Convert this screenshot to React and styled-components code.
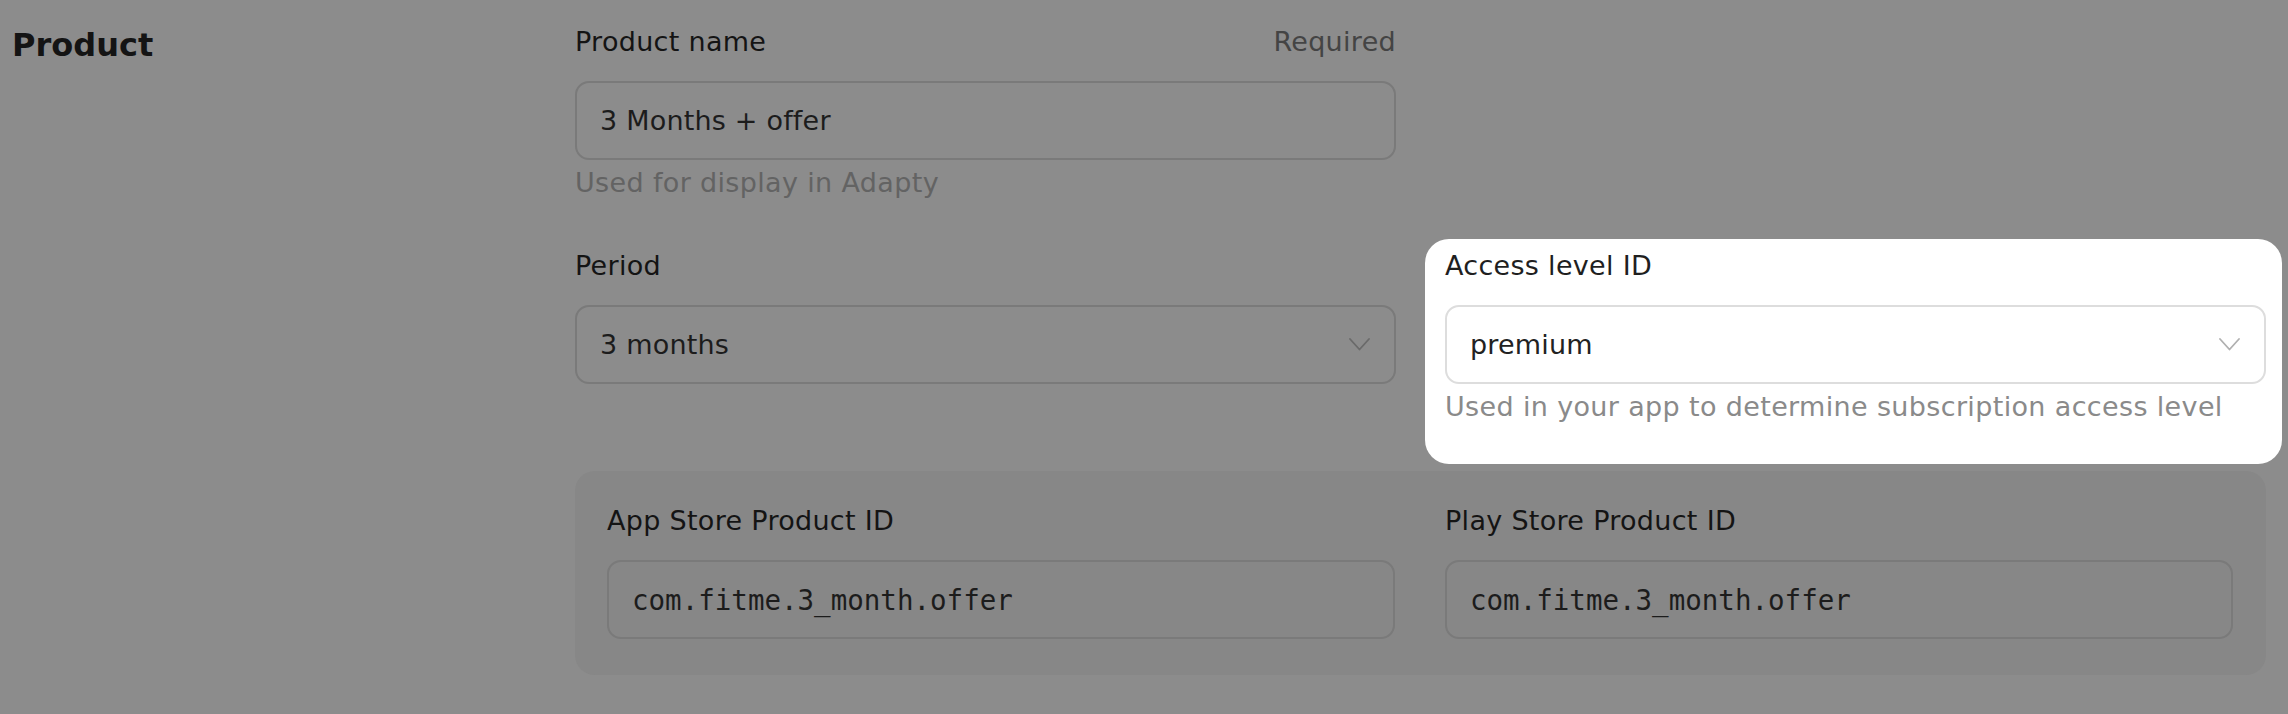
import React from "react";
import styled, { createGlobalStyle } from "styled-components";

const GlobalStyle = createGlobalStyle`
  html, body {
    margin: 0;
    padding: 0;
    background: #8c8c8c;
  }
  body {
    font-family: "DejaVu Sans", "Open Sans", sans-serif;
  }
`;

const Page = styled.div`
  display: flex;
  align-items: flex-start;
  min-height: 714px;
  padding: 23px 22px 0 12px;
  box-sizing: border-box;
`;

const Aside = styled.div`
  width: 563px;
  flex-shrink: 0;
`;

const Heading = styled.h2`
  margin: 0;
  font-size: 32px;
  line-height: 44px;
  font-weight: 700;
  color: #141414;
`;

const Main = styled.div`
  flex: 1;
  display: grid;
  grid-template-columns: 1fr 1fr;
  align-content: start;
  column-gap: 49px;
  row-gap: 45px;
  align-items: start;
`;

const Field = styled.div`
  display: flex;
  flex-direction: column;
  min-width: 0;
`;

const Spotlight = styled(Field)`
  position: relative;
  z-index: 1;
  background: #ffffff;
  border-radius: 24px;
  margin: -8px -16px -38px -20px;
  padding: 8px 16px 38px 20px;
`;

const LabelRow = styled.div`
  display: flex;
  justify-content: space-between;
  align-items: baseline;
  font-size: 27px;
  line-height: 38px;
  letter-spacing: 0.3px;
`;

const Label = styled.span`
  color: ${(p) => (p.$light ? "#1f1f1f" : "#141414")};
`;

const Required = styled.span`
  color: #444444;
`;

const Box = styled.div`
  display: flex;
  align-items: center;
  justify-content: space-between;
  height: 79px;
  margin-top: 20px;
  padding: 0 24px 0 23px;
  box-sizing: border-box;
  border: 2px solid ${(p) => (p.$light ? "#dddddd" : "#7a7a7a")};
  border-radius: 14px;
  background: ${(p) => (p.$light ? "#ffffff" : "transparent")};
  font-size: 27px;
  letter-spacing: 0.2px;
  color: ${(p) => (p.$light ? "#222222" : "#1c1c1c")};
`;

const Mono = styled.span`
  font-family: "DejaVu Sans Mono", "Liberation Mono", monospace;
  font-size: 27.5px;
  letter-spacing: 0;
  color: #1c1c1c;
`;

const Hint = styled.div`
  margin-top: 4px;
  font-size: 27px;
  line-height: 38px;
  letter-spacing: 0.35px;
  color: ${(p) => (p.$light ? "#8a8a8a" : "#636363")};
`;

const Chevron = ({ color }) => (
  <svg width="21" height="13" viewBox="0 0 21 13" fill="none">
    <polyline
      points="1,1 10.5,11.5 20,1"
      stroke={color}
      strokeWidth="1.8"
      strokeLinecap="round"
      strokeLinejoin="round"
    />
  </svg>
);

const Stores = styled.div`
  grid-column: 1 / -1;
  display: grid;
  grid-template-columns: 1fr 1fr;
  column-gap: 50px;
  padding: 31px 33px 36px 32px;
  background: #878787;
  border-radius: 20px;
`;

function App() {
  return (
    <>
      <GlobalStyle />
      <Page>
        <Aside>
          <Heading>Product</Heading>
        </Aside>
        <Main>
          <Field>
            <LabelRow>
              <Label>Product name</Label>
              <Required>Required</Required>
            </LabelRow>
            <Box>3 Months + offer</Box>
            <Hint>Used for display in Adapty</Hint>
          </Field>
          <div />
          <Field>
            <LabelRow>
              <Label>Period</Label>
            </LabelRow>
            <Box>
              3 months
              <Chevron color="#6a6a6a" />
            </Box>
          </Field>
          <Spotlight>
            <LabelRow>
              <Label $light>Access level ID</Label>
            </LabelRow>
            <Box $light>
              premium
              <Chevron color="#b0b0b0" />
            </Box>
            <Hint $light>
              Used in your app to determine subscription access level
            </Hint>
          </Spotlight>
          <Stores>
            <Field>
              <LabelRow>
                <Label>App Store Product ID</Label>
              </LabelRow>
              <Box>
                <Mono>com.fitme.3_month.offer</Mono>
              </Box>
            </Field>
            <Field>
              <LabelRow>
                <Label>Play Store Product ID</Label>
              </LabelRow>
              <Box>
                <Mono>com.fitme.3_month.offer</Mono>
              </Box>
            </Field>
          </Stores>
        </Main>
      </Page>
    </>
  );
}

export default App;
